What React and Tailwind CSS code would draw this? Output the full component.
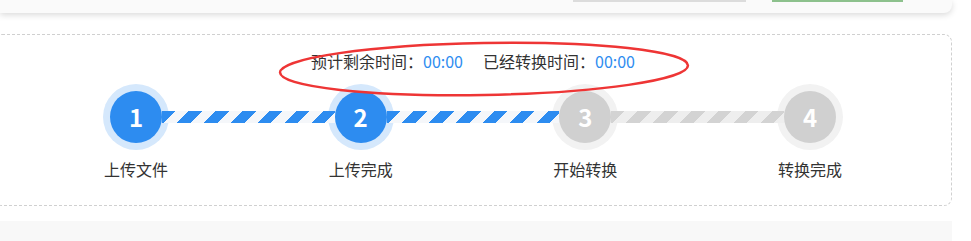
import React from "react";

const steps = [
  { n: 1, label: "上传文件", done: true },
  { n: 2, label: "上传完成", done: true },
  { n: 3, label: "开始转换", done: false },
  { n: 4, label: "转换完成", done: false },
];

const Step = ({ step }) => (
  <div className="flex w-[52px] shrink-0 flex-col items-center">
    <div
      className={
        step.done
          ? "flex h-[52px] w-[52px] items-center justify-center rounded-full bg-[#2d8cf0] text-[24px] font-bold text-white ring-[7px] ring-[#d5e8fc]"
          : "flex h-[52px] w-[52px] items-center justify-center rounded-full bg-[#d0d0d0] text-[24px] font-bold text-white ring-[7px] ring-[#f2f2f2]"
      }
    >
      {step.n}
    </div>
    <div className="mt-[16px] whitespace-nowrap text-base leading-5 text-[#333]">{step.label}</div>
  </div>
);

const Bar = ({ active }) => (
  <div
    className={
      active
        ? "relative z-10 mt-[20px] h-[12px] flex-1 bg-[repeating-linear-gradient(135deg,#2d8cf0_0px,#2d8cf0_9.5px,#f5f7fa_9.5px,#f5f7fa_19px)]"
        : "relative z-10 mt-[20px] h-[12px] flex-1 bg-[repeating-linear-gradient(135deg,#d3d3d3_0px,#d3d3d3_9.5px,#eeeeee_9.5px,#eeeeee_19px)]"
    }
  />
);

const App = () => {
  return (
    <div className="relative h-[241px] w-[971px] overflow-hidden bg-white font-['Noto_Sans_CJK_SC','Noto_Sans',sans-serif]">
      {/* top card */}
      <div className="flex h-[13px] w-[952px] items-start justify-end gap-[26px] rounded-br-lg bg-[#fafafa] pr-[49px] shadow-[0_2px_6px_rgba(0,0,0,0.15)]">
        <div className="h-[2px] w-[173px] bg-[#dcdcdc]" />
        <div className="h-[2px] w-[131px] bg-[#8dc18d]" />
      </div>

      {/* progress box */}
      <div className="-ml-[6px] mt-[21px] h-[172px] w-[958px] rounded-lg border border-dashed border-[#d0d0d0] pt-[16px]">
        <div className="flex justify-center text-base leading-5 text-[#333]">
          <span>预计剩余时间：</span>
          <span className="text-[#2d8cf0]">00:00</span>
          <span className="ml-[20px]">已经转换时间：</span>
          <span className="text-[#2d8cf0]">00:00</span>
        </div>

        <div className="mx-auto mt-[20px] flex w-[726px] items-start">
          <Step step={steps[0]} />
          <Bar active />
          <Step step={steps[1]} />
          <Bar active />
          <Step step={steps[2]} />
          <Bar />
          <Step step={steps[3]} />
        </div>
      </div>

      <div className="mt-[15px] h-[30px] w-[952px] bg-[#f8f8f8]" />

      {/* red annotation */}
      <svg className="pointer-events-none absolute left-0 top-0" width="971" height="241">
        <ellipse
          cx="484"
          cy="69"
          rx="204"
          ry="26"
          transform="rotate(-1 484 69)"
          fill="none"
          stroke="#ee3535"
          strokeWidth="2.5"
        />
      </svg>
    </div>
  );
};

export default App;
